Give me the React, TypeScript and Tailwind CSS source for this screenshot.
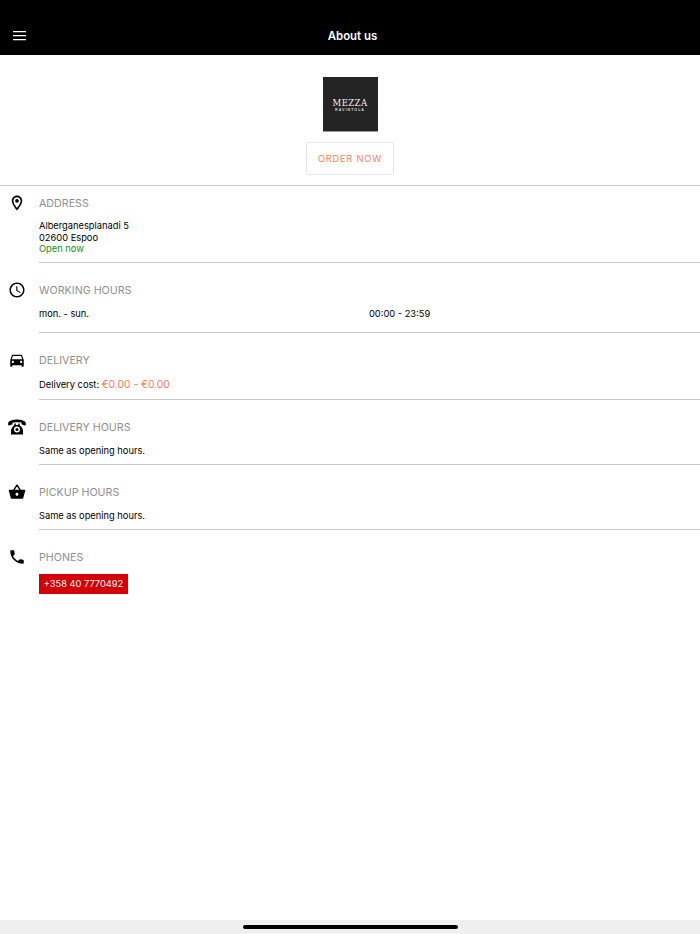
import { ReactNode } from "react";

function Section({ icon, iconTop, children, last }: { icon: ReactNode; iconTop: string; children: ReactNode; last?: boolean }) {
  return (
    <div className="flex">
      <div className={`w-[34px] mr-[5px] shrink-0 flex justify-center ${iconTop}`}>{icon}</div>
      <div className={`flex-1 ${last ? "" : "border-b border-[#c8c8c8]"}`}>{children}</div>
    </div>
  );
}

function Title({ children, className }: { children: ReactNode; className: string }) {
  return <div className={`text-[10.700px] leading-[14px] text-[#8e8e8e] ${className}`}>{children}</div>;
}

const PinIcon = () => (
  <svg width="18" height="18" viewBox="0 0 24 24">
    <path d="M12 2C8.130 2 5 5.130 5 9c0 5.250 7 13 7 13s7-7.750 7-13c0-3.870-3.130-7-7-7zm0 2.200c2.650 0 4.800 2.150 4.800 4.800 0 2.880-2.800 7-4.800 9.600C10 16 7.200 11.850 7.200 9c0-2.650 2.150-4.800 4.800-4.800zm0 2.300a2.500 2.500 0 1 0 0 5 2.500 2.500 0 0 0 0-5z" />
  </svg>
);

const ClockIcon = () => (
  <svg width="18" height="18" viewBox="0 0 24 24">
    <path d="M11.990 2C6.470 2 2 6.480 2 12s4.470 10 9.990 10C17.520 22 22 17.520 22 12S17.520 2 11.990 2zM12 20c-4.420 0-8-3.580-8-8s3.580-8 8-8 8 3.580 8 8-3.580 8-8 8zm.5-13H11v6l5.250 3.150.75-1.230-4.500-2.670z" />
  </svg>
);

const CarIcon = () => (
  <svg width="18" height="18" viewBox="0 0 24 24">
    <path d="M18.920 6.010C18.720 5.420 18.160 5 17.500 5h-11c-.66 0-1.210.42-1.420 1.010L3 12v8c0 .55.45 1 1 1h1c.55 0 1-.45 1-1v-1h12v1c0 .55.45 1 1 1h1c.55 0 1-.45 1-1v-8l-2.080-5.990zM6.500 16c-.83 0-1.500-.67-1.500-1.500S5.670 13 6.500 13s1.500.67 1.500 1.500S7.330 16 6.500 16zm11 0c-.83 0-1.500-.67-1.500-1.500s.67-1.500 1.500-1.500 1.500.67 1.500 1.500-.67 1.500-1.500 1.500zM5 11l1.500-4.500h11L19 11H5z" />
  </svg>
);

const OldPhoneIcon = () => (
  <svg width="18" height="16" viewBox="0 0 18 16">
    <path d="M9 .6C5 .6 1.800 1.600.6 3 .1 3.600 0 5.200.3 6.100c.1.300.4.400.7.300l3-.8c.4-.1.500-.3.500-.7V3.800C5.600 3.400 7.200 3.200 9 3.200s3.400.2 4.500.6v1.100c0 .4.100.6.500.7l3 .8c.3.100.6 0 .7-.3.300-.9.200-2.500-.3-3.100C16.200 1.600 13 .6 9 .6z" />
    <path fillRule="evenodd" d="M6.300 4.600h1.500v1.400h2.400V4.600h1.500v1.700c1.500.9 3.200 3.300 3.300 5.300v3.800H3v-3.800c.1-2 1.800-4.400 3.300-5.300V4.600zM9 7.500a3 3 0 1 0 0 6 3 3 0 0 0 0-6zm0 1.400a1.600 1.600 0 1 1 0 3.200 1.600 1.600 0 0 1 0-3.200z" />
  </svg>
);

const BasketIcon = () => (
  <svg width="18" height="18" viewBox="0 0 24 24">
    <path d="M17.210 9l-4.380-6.560c-.19-.28-.51-.42-.83-.42-.32 0-.64.14-.83.43L6.790 9H2c-.55 0-1 .45-1 1 0 .09.01.18.04.27l2.540 9.270c.23.84 1 1.460 1.920 1.460h13c.92 0 1.690-.62 1.930-1.460l2.540-9.270L23 10c0-.55-.45-1-1-1h-4.790zM9 9l3-4.400L15 9H9zm3 8c-1.100 0-2-.9-2-2s.9-2 2-2 2 .9 2 2-.9 2-2 2z" />
  </svg>
);

const PhoneIcon = () => (
  <svg width="18" height="18" viewBox="0 0 24 24">
    <path d="M6.620 10.790c1.440 2.830 3.760 5.140 6.590 6.590l2.200-2.200c.27-.27.67-.36 1.020-.24 1.120.37 2.330.57 3.570.57.55 0 1 .45 1 1V20c0 .55-.45 1-1 1-9.390 0-17-7.610-17-17 0-.55.45-1 1-1h3.500c.55 0 1 .45 1 1 0 1.250.2 2.450.57 3.570.11.35.03.74-.25 1.020l-2.200 2.200z" />
  </svg>
);

export default function App() {
  return (
    <div className="font-['Inter','Liberation_Sans',sans-serif] flex flex-col h-[934px] bg-white text-black text-[9.300px]">
      <header className="h-[55px] bg-black relative shrink-0 flex items-end justify-center pb-[10px]">
        <svg width="14" height="10" viewBox="0 0 14 10" className="absolute left-[13px] top-[31px]">
          <path d="M0 0h13v1.300H0zM0 4h13v1.300H0zM0 8h13v1.300H0z" fill="#fff" />
        </svg>
        <span className="text-white text-[11.400px] leading-[18px] font-semibold ml-[5px]">About us</span>
      </header>

      <main className="flex-1">
        <div className="flex flex-col items-center pt-[22px] pb-[10px] border-b border-[#c8c8c8]">
          <div className="w-[55px] h-[55px] bg-[#242424] flex flex-col items-center justify-center border-b border-[#9a9a9a]">
            <span className="font-['DejaVu_Serif',serif] text-[8.500px] leading-[10px] tracking-[0.4px] text-[#f2f2f2] mt-[2px]">MEZZA</span>
            <span className="font-['Liberation_Sans',sans-serif] text-[3.500px] leading-[5px] tracking-[1.100px] text-[#d8d8d8] font-bold">RAVINTOLA</span>
          </div>
          <button className="mt-[10px] w-[88px] h-[33px] border border-[#e6e6e6] rounded-[2px] text-[#fb7d5b] text-[9.200px] tracking-[0.85px] flex items-center justify-center">
            ORDER NOW
          </button>
        </div>

        <Section icon={<PinIcon />} iconTop="pt-[8px]">
          <Title className="pt-[11px]">ADDRESS</Title>
          <div className="mt-[9px] leading-[11.500px] pb-[7.500px]">
            <div>Alberganesplanadi 5</div>
            <div>02600 Espoo</div>
            <div className="text-[#178c17]">Open now</div>
          </div>
        </Section>

        <Section icon={<ClockIcon />} iconTop="pt-[18px]">
          <Title className="pt-[21px]">WORKING HOURS</Title>
          <div className="mt-[9px] flex leading-[14px] pb-[11px]">
            <span className="w-[330px]">mon. - sun.</span>
            <span>00:00 - 23:59</span>
          </div>
        </Section>

        <Section icon={<CarIcon />} iconTop="pt-[18px]">
          <Title className="pt-[21px]">DELIVERY</Title>
          <div className="mt-[8px] leading-[16px] pb-[6px]">
            Delivery cost: <span className="text-[#fb7d5b] text-[10.300px]">€0.00 - €0.00</span>
          </div>
        </Section>

        <Section icon={<OldPhoneIcon />} iconTop="pt-[19px]">
          <Title className="pt-[21px]">DELIVERY HOURS</Title>
          <div className="mt-[9px] leading-[14px] pb-[6px]">Same as opening hours.</div>
        </Section>

        <Section icon={<BasketIcon />} iconTop="pt-[18px]">
          <Title className="pt-[21px]">PICKUP HOURS</Title>
          <div className="mt-[9px] leading-[14px] pb-[6px]">Same as opening hours.</div>
        </Section>

        <Section icon={<PhoneIcon />} iconTop="pt-[18px]" last>
          <Title className="pt-[21px]">PHONES</Title>
          <div className="mt-[9px] w-[89px] h-[20px] bg-[#d40000] text-white flex items-center justify-center leading-[20px] whitespace-nowrap">
            +358 40 7770492
          </div>
        </Section>
      </main>

      <footer className="h-[14px] bg-[#efefef] shrink-0 flex justify-center pt-[5px]">
        <div className="w-[215px] h-[3.500px] bg-black rounded-full" />
      </footer>
    </div>
  );
}
